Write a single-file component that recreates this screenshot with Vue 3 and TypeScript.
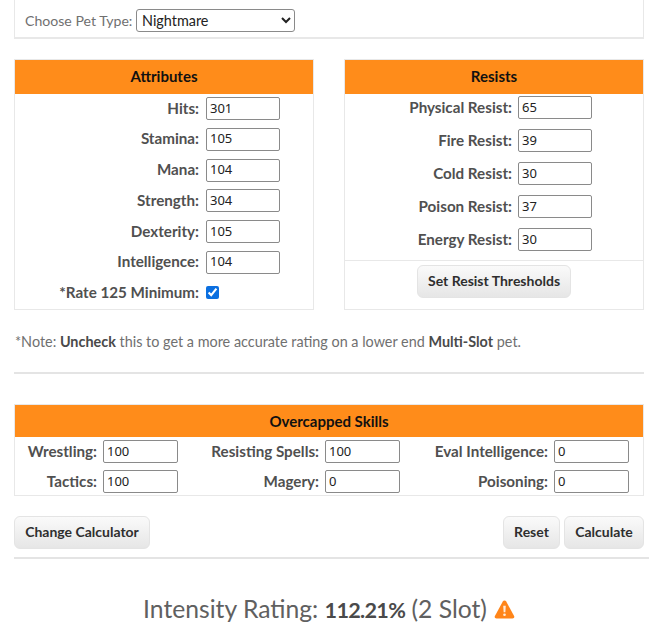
<script setup lang="ts">
const attributes = [
  { label: 'Hits', value: '301' },
  { label: 'Stamina', value: '105' },
  { label: 'Mana', value: '104' },
  { label: 'Strength', value: '304' },
  { label: 'Dexterity', value: '105' },
  { label: 'Intelligence', value: '104' },
]
const resists = [
  { label: 'Physical Resist', value: '65' },
  { label: 'Fire Resist', value: '39' },
  { label: 'Cold Resist', value: '30' },
  { label: 'Poison Resist', value: '37' },
  { label: 'Energy Resist', value: '30' },
]
const skills = [
  { label: 'Wrestling', value: '100' },
  { label: 'Resisting Spells', value: '100' },
  { label: 'Eval Intelligence', value: '0' },
  { label: 'Tactics', value: '100' },
  { label: 'Magery', value: '0' },
  { label: 'Poisoning', value: '0' },
]
</script>

<template>
  <div class="page">
    <div class="type-box">
      <label class="type-label" for="pet">Choose Pet Type:</label>
      <select id="pet" class="type-select">
        <option>Nightmare</option>
      </select>
    </div>

    <div class="columns">
      <section class="panel">
        <h2 class="panel-head">Attributes</h2>
        <div class="attr-rows">
          <div v-for="a in attributes" :key="a.label" class="attr-row">
            <span class="label">{{ a.label }}:</span>
            <input class="num" :value="a.value" />
          </div>
          <div class="attr-row check-row">
            <span class="label">*Rate 125 Minimum:</span>
            <input class="check" type="checkbox" checked />
          </div>
        </div>
      </section>

      <section class="panel">
        <h2 class="panel-head">Resists</h2>
        <div class="res-rows">
          <div v-for="r in resists" :key="r.label" class="res-row">
            <span class="label">{{ r.label }}:</span>
            <input class="num" :value="r.value" />
          </div>
        </div>
        <div class="res-foot">
          <button class="btn thresholds" type="button">Set Resist Thresholds</button>
        </div>
      </section>
    </div>

    <p class="note">*Note: <b>Uncheck</b> this to get a more accurate rating on a lower end <b>Multi-Slot</b> pet.</p>

    <hr class="rule" />

    <section class="panel skills">
      <h2 class="panel-head">Overcapped Skills</h2>
      <div class="skill-grid">
        <div v-for="s in skills" :key="s.label" class="skill">
          <span class="label">{{ s.label }}:</span>
          <input class="num" :value="s.value" />
        </div>
      </div>
    </section>

    <div class="actions">
      <button class="btn change" type="button">Change Calculator</button>
      <div class="actions-right">
        <button class="btn reset" type="button">Reset</button>
        <button class="btn calc" type="button">Calculate</button>
      </div>
    </div>

    <hr class="rule wide" />

    <div class="result">
      <span class="result-text">Intensity Rating: <b>112.21%</b> (2 Slot)</span>
      <svg class="warn" width="21" height="19" viewBox="0 0 21 20" aria-hidden="true">
        <path d="M10.5 0.5c.8 0 1.4.4 1.8 1.1l8.3 15.2c.7 1.3-.2 2.7-1.7 2.7H2.1c-1.5 0-2.4-1.4-1.7-2.7L8.7 1.6c.4-.7 1-1.1 1.8-1.1z" fill="#ff8519" />
        <path d="M9.2 6h2.6l-.4 7H9.6z" fill="#fff" fill-opacity=".85" />
        <circle cx="10.5" cy="15.5" r="1.4" fill="#fff" fill-opacity=".85" />
      </svg>
    </div>
  </div>
</template>

<style>
html, body { background: #fff; }
</style>

<style scoped>
.page {
  width: 649px;
  height: 624px;
  overflow: hidden;
  box-sizing: border-box;
  padding-left: 14px;
  font-family: Lato, "Noto Sans", sans-serif;
  font-size: 15px;
  color: #555;
}
.type-box {
  width: 630px;
  height: 39px;
  box-sizing: border-box;
  border: 1px solid #e8e8e8;
  border-width: 0 1px 2px 1px;
  padding: 4px 0 0 10px;
  display: flex;
  align-items: center;
  gap: 4px;
}
.type-label { color: #707070; font-size: 14.1px; width: 107px; white-space: nowrap; }
.type-select {
  width: 159px;
  height: 23px;
  box-sizing: border-box;
  font-family: Lato, "Noto Sans", sans-serif;
  font-size: 14.4px;
  color: #222;
  background: #fff;
  border: 1px solid #8a8a8a;
  border-radius: 3px;
  padding: 0 0 0 1px;
}
.columns {
  display: flex;
  gap: 30px;
  margin-top: 20px;
  width: 630px;
}
.panel {
  flex: 1;
  height: 251px;
  box-sizing: border-box;
  border: 1px solid #e8e8e8;
  display: flex;
  flex-direction: column;
}
.panel-head {
  margin: 0;
  height: 34px;
  line-height: 33px;
  text-align: center;
  background: #ff8c1a;
  color: #111;
  font-size: 15px;
  font-weight: 700;
  flex: none;
}
.label { color: #505050; font-weight: 700; font-size: 15.2px; line-height: 21px; margin-top: -1px; white-space: nowrap; }
.num {
  width: 74px;
  height: 23px;
  box-sizing: border-box;
  border: 1px solid #8a8a8a;
  border-radius: 2px;
  padding: 0 3px 2px;
  font-family: "Noto Sans", sans-serif;
  font-size: 13px;
  color: #222;
  background: #fff;
  box-shadow: none;
  outline: none;
}
.attr-rows {
  display: flex;
  flex-direction: column;
  padding-top: 3px;
  gap: 7.8px;
}
.attr-row {
  display: grid;
  grid-template-columns: 184px auto;
  justify-content: start;
  column-gap: 7px;
  align-items: center;
  height: 23px;
}
.attr-row .label, .res-row .label { text-align: right; }
.check {
  width: 13px;
  height: 13px;
  margin: 0 0 2px 0;
  accent-color: #0b6fe0;
}
.res-rows {
  display: flex;
  flex-direction: column;
  gap: 10px;
  padding-top: 2px;
  height: 166px;
  box-sizing: border-box;
  flex: none;
}
.res-row {
  display: grid;
  grid-template-columns: 167px auto;
  justify-content: start;
  column-gap: 6px;
  align-items: center;
  height: 23px;
}
.res-foot {
  border-top: 1px solid #e8e8e8;
  display: flex;
  justify-content: center;
  padding-top: 4px;
}
.btn {
  height: 33px;
  box-sizing: border-box;
  padding: 0 0 2px;
  border: 1px solid #e4e4e4;
  border-radius: 6px;
  background: linear-gradient(#fafafa, #e6e6e6);
  color: #2e2e2e;
  font-family: Lato, "Noto Sans", sans-serif;
  font-size: 14px;
  font-weight: 700;
}
.thresholds { width: 154px; }
.change { width: 136px; }
.reset { width: 57px; }
.calc { width: 80px; }
.note {
  margin: 22px 0 0 1px;
  font-size: 14.4px;
  line-height: 19px;
  color: #707070;
  white-space: nowrap;
}
.note b { color: #4a4a4a; font-weight: 700; }
.rule {
  margin: 21px 0 0 0;
  width: 630px;
  height: 2px;
  background: #e4e4e4;
  border: 0;
}
.rule.wide { width: 635px; margin-top: 8px; }
.skills {
  width: 630px;
  height: 92px;
  margin-top: 30px;
  flex: none;
}
.skills .panel-head { height: 32px; line-height: 32px; }
.skill-grid {
  display: grid;
  grid-template-columns: 163px 222px 229px;
  row-gap: 7px;
  padding-top: 3px;
}
.skill {
  display: flex;
  justify-content: flex-end;
  align-items: center;
  gap: 6px;
  height: 23px;
}
.skill .num { width: 75px; }
.actions {
  display: flex;
  justify-content: space-between;
  width: 630px;
  margin-top: 20px;
}
.actions-right { display: flex; gap: 4px; }
.result {
  display: flex;
  justify-content: center;
  align-items: center;
  gap: 7px;
  width: 630px;
  height: 36px;
  margin-top: 32px;
  font-size: 24.7px;
  line-height: 36px;
  color: #606060;
}
.result-text { white-space: nowrap; }
.result b { font-weight: 700; color: #4a4a4a; font-size: 21.6px; letter-spacing: -0.7px; }
.warn { flex: none; }
</style>
